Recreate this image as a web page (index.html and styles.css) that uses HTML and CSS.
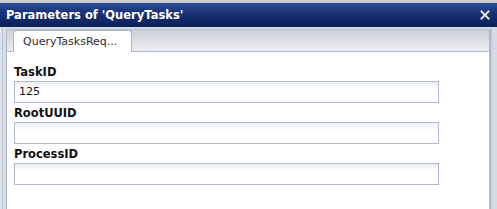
FILE: index.html
```html
<!DOCTYPE html>
<html>
<head>
<meta charset="utf-8">
<link rel="stylesheet" href="styles.css">
</head>
<body>
<div class="topband"></div>
<div class="titlebar">
  <span class="title">Parameters of 'QueryTasks'</span>
  <svg class="close" width="10" height="10" viewBox="0 0 10 10">
    <path d="M1.5 1.5 L8.5 8.5 M8.5 1.5 L1.5 8.5" stroke="#8a93a8" stroke-width="2.4" stroke-linecap="square"/>
    <path d="M1.5 1.5 L8.5 8.5 M8.5 1.5 L1.5 8.5" stroke="#f2f2f2" stroke-width="1.3" stroke-linecap="square"/>
  </svg>
</div>
<div class="win">
  <div class="lstrip"></div>
  <div class="panel">
    <div class="tabstrip">
      <div class="tab">QueryTasksReq...</div>
    </div>
    <div class="content">
      <div class="field">
        <div class="label">TaskID</div>
        <div class="input">125</div>
      </div>
      <div class="field">
        <div class="label">RootUUID</div>
        <div class="input"></div>
      </div>
      <div class="field">
        <div class="label">ProcessID</div>
        <div class="input"></div>
      </div>
    </div>
  </div>
  <div class="rstrip"></div>
</div>
</body>
</html>
```
FILE: styles.css
```css
html, body {
  margin: 0;
  padding: 0;
}
body {
  width: 497px;
  height: 209px;
  overflow: hidden;
  background: #d6dce6;
  font-family: "DejaVu Sans", Verdana, sans-serif;
}
.topband {
  height: 3px;
  background: linear-gradient(#d2d5da, #c3c6cc);
}
.titlebar {
  height: 24px;
  display: flex;
  align-items: center;
  justify-content: space-between;
  padding: 0 7px 0 6px;
  background: linear-gradient(#2f4f9b 0%, #1c357a 35%, #0b1f57 100%);
}
.title {
  color: #ffffff;
  font-weight: bold;
  font-size: 11.5px;
  line-height: 14px;
}
.close {
  display: block;
  margin-right: 0;
}
.win {
  display: flex;
  height: 182px;
}
.lstrip {
  width: 6px;
  background: linear-gradient(to right, #dde2ea 0, #dde2ea 2px, #bcc3cf 2px, #bcc3cf 3px, #d7dde7 3px, #d7dde7 6px);
}
.rstrip {
  width: 6px;
  background: linear-gradient(to right, #c4cad5 0, #c4cad5 1px, #d5dbe5 1px);
}
.panel {
  flex: 1;
  margin-top: 2px;
  border-top: 1px solid #b8bfcb;
  border-left: 1px solid #aeb6c3;
  border-right: 2px solid #b3bac6;
  display: flex;
  flex-direction: column;
}
.tabstrip {
  height: 22px;
  padding: 1px 0 0 6px;
  box-sizing: border-box;
  background: linear-gradient(#cdd0d8, #ecedf1);
  border-bottom: 1px solid #b3bed0;
  display: flex;
  align-items: flex-end;
}
.tab {
  width: 119px;
  height: 22px;
  box-sizing: border-box;
  margin-bottom: -1px;
  background: #ffffff;
  border: 1px solid #a9b6c9;
  border-bottom: none;
  border-radius: 4px 4px 0 0;
  padding-left: 9px;
  font-size: 11px;
  line-height: 21px;
  color: #2e2e2e;
}
.content {
  flex: 1;
  background: #ffffff;
  padding: 11px 0 0 7px;
}
.field {
  height: 41px;
}
.label {
  font-weight: bold;
  font-size: 11.5px;
  line-height: 18px;
  color: #111111;
}
.input {
  width: 425px;
  height: 22px;
  box-sizing: border-box;
  border: 1px solid #b5b8cd;
  background: linear-gradient(#eaeeee 0, #f6f8f8 4px, #ffffff 8px);
  padding-left: 4px;
  font-size: 11px;
  line-height: 20px;
  color: #111111;
}
```
